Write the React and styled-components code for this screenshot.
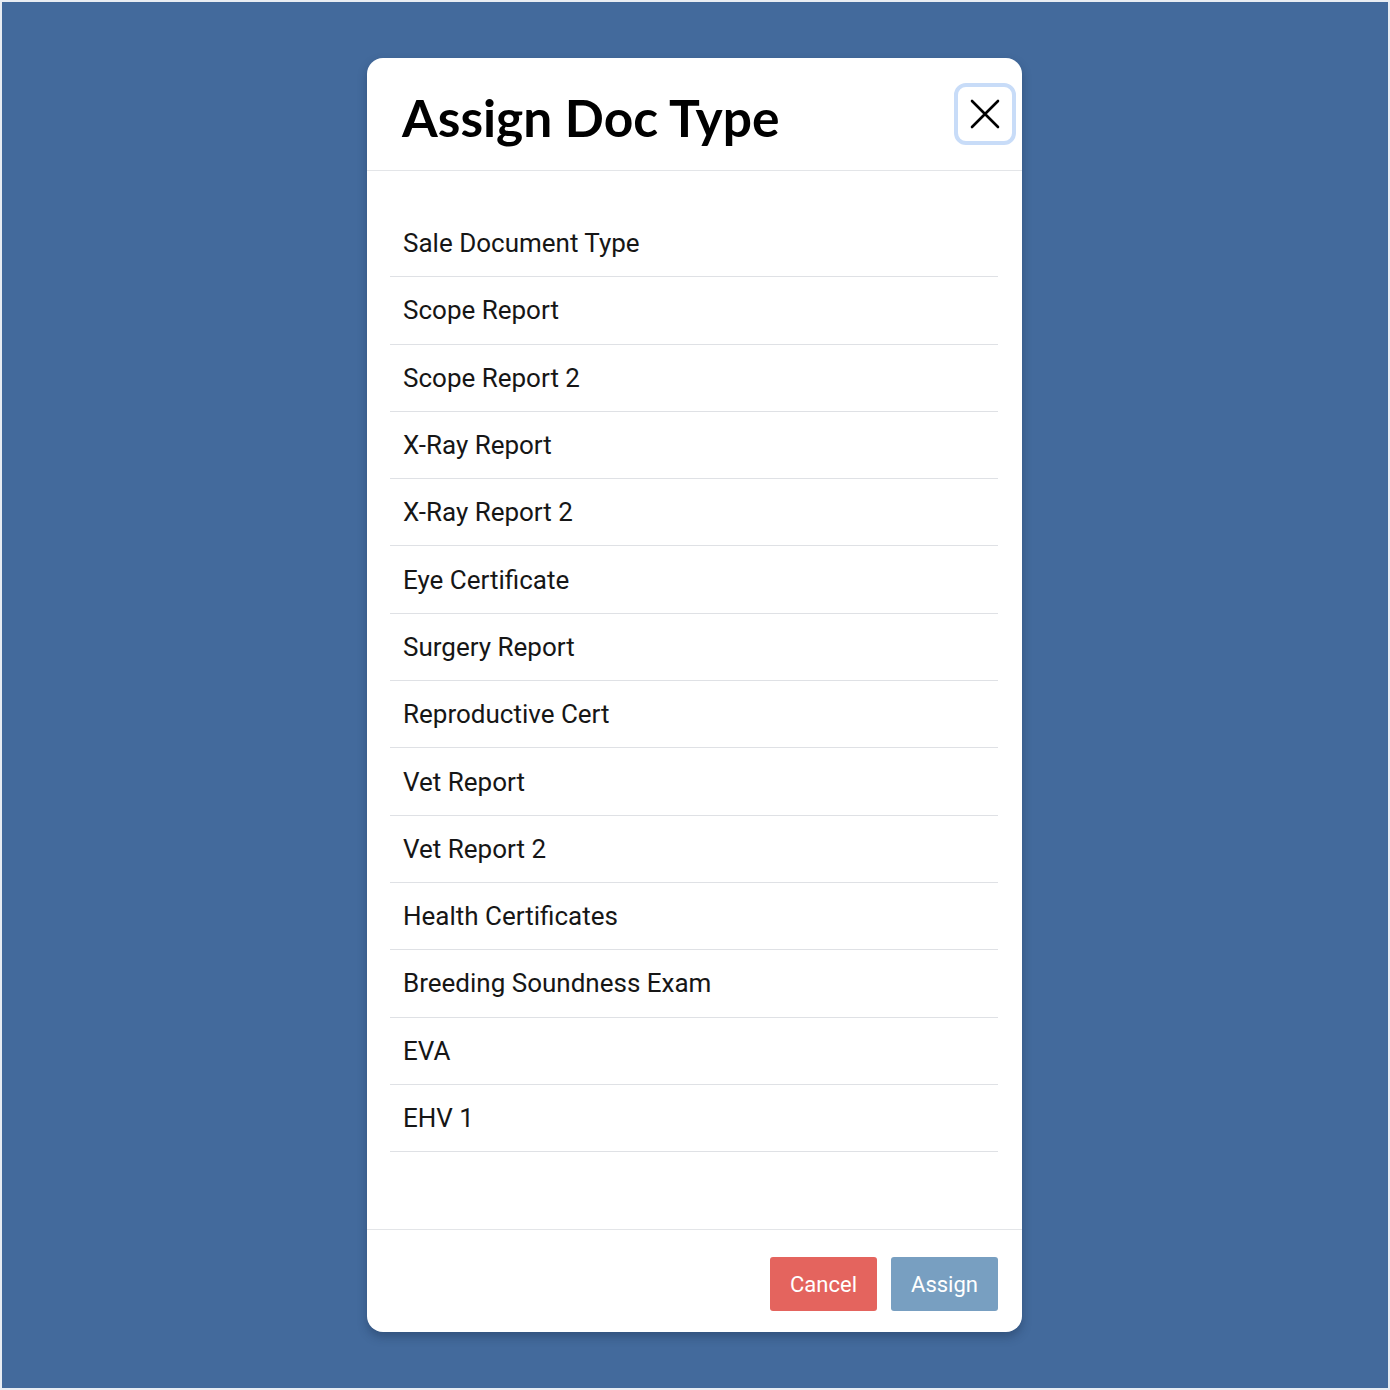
import React from "react";
import styled, { createGlobalStyle } from "styled-components";

const Global = createGlobalStyle`
  html, body { margin: 0; padding: 0; }
  body { background: #436a9c; font-family: Roboto, "Liberation Sans", sans-serif; }
  * { box-sizing: border-box; }
`;

const Page = styled.div`
  width: 1390px;
  height: 1390px;
  border: 2px solid #e9edf3;
  background: #436a9c;
  display: flex;
  justify-content: flex-start;
  padding: 56px 0 0 365px;
`;

const Modal = styled.div`
  width: 655px;
  height: 1274px;
  background: #fff;
  border-radius: 16px;
  box-shadow: 0 5px 10px rgba(20, 40, 70, 0.35);
  display: flex;
  flex-direction: column;
`;

const Header = styled.div`
  height: 113px;
  border-bottom: 1.5px solid #e3e5e8;
  display: flex;
  align-items: center;
  justify-content: space-between;
  padding: 0 6px 0 35px;
`;

const Title = styled.h1`
  margin: 0;
  font-family: Lato, "Noto Sans", sans-serif;
  font-weight: 700;
  font-size: 51.5px;
  color: #000;
  padding-top: 6px;
`;

const CloseButton = styled.button`
  width: 62px;
  height: 62px;
  border: 4px solid #c8dcf8;
  border-radius: 12px;
  background: #fff;
  display: flex;
  align-items: center;
  justify-content: center;
  padding: 0;
  cursor: pointer;
`;

const Body = styled.div`
  flex: 1;
  padding: 39px 24px 0 23px;
`;

const List = styled.ul`
  list-style: none;
  margin: 0;
  padding: 0;
`;

const Item = styled.li`
  height: 67.3px;
  border-bottom: 1.5px solid #dfe1e5;
  display: flex;
  align-items: center;
  padding: 0 13px;
  font-family: Roboto, "Liberation Sans", sans-serif;
  font-size: 26px;
  color: #161616;
`;

const Footer = styled.div`
  height: 103px;
  border-top: 1.5px solid #e3e5e8;
  display: flex;
  justify-content: flex-end;
  align-items: flex-start;
  gap: 14px;
  padding: 27px 24px 0 0;
`;

const Button = styled.button`
  width: 107px;
  height: 54px;
  border: none;
  border-radius: 3px;
  background: ${(p) => p.$bg};
  color: #fff;
  font-family: Roboto, "Liberation Sans", sans-serif;
  font-size: 22px;
  cursor: pointer;
`;

const items = [
  "Sale Document Type",
  "Scope Report",
  "Scope Report 2",
  "X-Ray Report",
  "X-Ray Report 2",
  "Eye Certificate",
  "Surgery Report",
  "Reproductive Cert",
  "Vet Report",
  "Vet Report 2",
  "Health Certificates",
  "Breeding Soundness Exam",
  "EVA",
  "EHV 1",
];

export default function App() {
  return (
    <>
      <Global />
      <Page>
        <Modal>
          <Header>
            <Title>Assign Doc Type</Title>
            <CloseButton aria-label="Close">
              <svg width="30" height="30" viewBox="0 0 30 30">
                <path d="M2 2 L28 28 M28 2 L2 28" stroke="#000" strokeWidth="2.6" strokeLinecap="round" />
              </svg>
            </CloseButton>
          </Header>
          <Body>
            <List>
              {items.map((t) => (
                <Item key={t}>{t}</Item>
              ))}
            </List>
          </Body>
          <Footer>
            <Button $bg="#e4645e">Cancel</Button>
            <Button $bg="#789fc1">Assign</Button>
          </Footer>
        </Modal>
      </Page>
    </>
  );
}
